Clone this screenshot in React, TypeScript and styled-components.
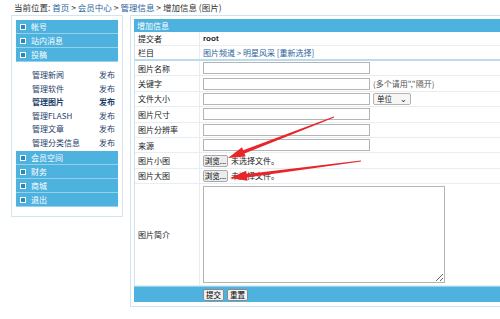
import React from 'react'
import styled, { createGlobalStyle } from 'styled-components'

const GlobalStyle = createGlobalStyle`
  html, body {
    margin: 0;
    padding: 0;
    background: #fff;
    overflow: hidden;
  }
  body {
    font-family: "Noto Sans CJK SC", "Liberation Sans", sans-serif;
    font-size: 8.5px;
    color: #222;
  }
`

const BLUE = '#4db2de'

const Page = styled.div`
  position: relative;
  width: 500px;
  height: 319px;
  overflow: hidden;
`

const Crumb = styled.div`
  height: 15px;
  line-height: 15px;
  padding-left: 14px;
  font-size: 8.5px;
  color: #333;
  a {
    color: #2a5f9a;
    text-decoration: none;
  }
`

const Body = styled.div`
  display: flex;
  align-items: flex-start;
  gap: 7px;
  padding-left: 11px;
`

const Side = styled.div`
  width: 102px;
  flex: none;
  border: 1px solid #d3e5ef;
  padding: 4px 4px 9px 4px;
`

const SideHead = styled.div`
  height: 13px;
  line-height: 13px;
  background: ${BLUE};
  border-bottom: 1px solid #93d1ec;
  color: #fff;
  display: flex;
  align-items: center;
  gap: 5px;
  padding-left: 4px;
  font-size: 8px;
`

const Box = styled.span`
  width: 4px;
  height: 4px;
  border: 1px solid #fff;
  background: #2f86b8;
  flex: none;
`

const SideList = styled.div`
  padding: 6px 0 2px 0;
`

const SideItem = styled.div<{ $active?: boolean }>`
  height: 13.5px;
  line-height: 13.5px;
  display: flex;
  justify-content: space-between;
  padding: 0 3px 0 16px;
  font-size: 8px;
  color: #1e3f6a;
  font-weight: ${p => (p.$active ? 700 : 400)};
`

const Main = styled.div`
  flex: none;
  width: 380px;
  border: 1px solid #cfe3ee;
  padding: 3px 0 4px 3px;
`

const Head = styled.div`
  height: 13px;
  line-height: 13px;
  background: ${BLUE};
  color: #fff;
  padding-left: 3px;
  font-size: 8px;
`

const Table = styled.div`
  border-left: 1px solid #cfe3ee;
`

const Row = styled.div<{ $h?: number; $sep?: boolean }>`
  display: flex;
  height: ${p => p.$h ?? 15.4}px;
  box-sizing: border-box;
  border-bottom: ${p => (p.$sep ? '2px solid #b8dcee' : '1px solid #e6eef3')};
`

const Label = styled.div`
  box-sizing: border-box;
  width: 65px;
  flex: none;
  border-right: 1px solid #e6eef3;
  padding-left: 3px;
  display: flex;
  align-items: center;
  font-size: 8px;
  color: #222;
`

const Value = styled.div`
  flex: 1;
  display: flex;
  align-items: center;
  padding-left: 3px;
  gap: 3px;
  font-size: 8px;
`

const Strong = styled.b`
  font-family: "Liberation Sans", sans-serif;
  font-size: 8px;
`

const Link = styled.span`
  color: #2a5f9a;
`

const Input = styled.input`
  box-sizing: border-box;
  width: 167px;
  height: 12px;
  border: 1px solid #b4b4b4;
  padding: 0;
  margin: 0;
`

const Hint = styled.span`
  color: #555;
  font-size: 8px;
`

const Select = styled.div`
  box-sizing: border-box;
  width: 38px;
  height: 12px;
  border: 1px solid #b4b4b4;
  border-radius: 2px;
  display: flex;
  align-items: center;
  justify-content: space-between;
  padding: 0 3px;
  font-size: 7.5px;
  background: #f6f6f6;
`

const FileBtn = styled.button`
  box-sizing: border-box;
  height: 12px;
  width: 25px;
  padding: 0;
  border: 1px solid #a9a9a9;
  border-radius: 2px;
  background: #ececec;
  font-family: inherit;
  font-size: 7.5px;
  line-height: 10px;
`

const TextArea = styled.textarea`
  box-sizing: border-box;
  width: 242px;
  height: 97px;
  border: 1px solid #b4b4b4;
  margin: 0;
`

const Foot = styled.div`
  height: 15px;
  background: ${BLUE};
  border-top: 1px solid #93d1ec;
  display: flex;
  align-items: center;
  gap: 3px;
  padding-left: 69px;
`

const FootBtn = styled.button`
  box-sizing: border-box;
  height: 12px;
  padding: 0 2px;
  border: 1px solid #8a8a8a;
  border-radius: 2px;
  background: #f0f0f0;
  font-family: inherit;
  font-size: 7.5px;
  line-height: 10px;
`

const Arrows = styled.svg`
  position: absolute;
  left: 0;
  top: 0;
  pointer-events: none;
`

const heads = ['帐号', '站内消息', '投稿']
const items = ['管理新闻', '管理软件', '管理图片', '管理FLASH', '管理文章', '管理分类信息']
const tails = ['会员空间', '财务', '商城', '退出']

function arrow(x1: number, y1: number, x2: number, y2: number) {
  const dx = x2 - x1
  const dy = y2 - y1
  const len = Math.hypot(dx, dy)
  const ux = dx / len
  const uy = dy / len
  const nx = -uy
  const ny = ux
  const hl = 17
  const hw = 5
  const bx = x2 - ux * hl
  const by = y2 - uy * hl
  const pts = [
    [x1 + nx * 0.6, y1 + ny * 0.6],
    [bx + nx * 1.8, by + ny * 1.8],
    [bx + nx * hw, by + ny * hw],
    [x2, y2],
    [bx - nx * hw, by - ny * hw],
    [bx - nx * 1.8, by - ny * 1.8],
    [x1 - nx * 0.6, y1 - ny * 0.6],
  ]
  return pts.map(p => p.join(',')).join(' ')
}

export default function App() {
  return (
    <Page>
      <GlobalStyle />
      <Crumb>
        当前位置: <a>首页</a> &gt; <a>会员中心</a> &gt; <a>管理信息</a> &gt; 增加信息 (图片)
      </Crumb>
      <Body>
        <Side>
          {heads.map(h => (
            <SideHead key={h}><Box />{h}</SideHead>
          ))}
          <SideList>
            {items.map(it => (
              <SideItem key={it} $active={it === '管理图片'}>
                <span>{it}</span><span>发布</span>
              </SideItem>
            ))}
          </SideList>
          {tails.map(h => (
            <SideHead key={h}><Box />{h}</SideHead>
          ))}
        </Side>
        <Main>
          <Head>增加信息</Head>
          <Table>
            <Row $h={14}>
              <Label>提交者</Label>
              <Value><Strong>root</Strong></Value>
            </Row>
            <Row $h={15} $sep>
              <Label>栏目</Label>
              <Value><Link>图片频道 &gt; 明星风采 [重新选择]</Link></Value>
            </Row>
            <Row>
              <Label>图片名称</Label>
              <Value><Input /></Value>
            </Row>
            <Row>
              <Label>关键字</Label>
              <Value><Input /><Hint>(多个请用","隔开)</Hint></Value>
            </Row>
            <Row>
              <Label>文件大小</Label>
              <Value>
                <Input />
                <Select><span>单位</span><span>⌄</span></Select>
              </Value>
            </Row>
            <Row>
              <Label>图片尺寸</Label>
              <Value><Input /></Value>
            </Row>
            <Row>
              <Label>图片分辨率</Label>
              <Value><Input /></Value>
            </Row>
            <Row>
              <Label>来源</Label>
              <Value><Input /></Value>
            </Row>
            <Row>
              <Label>图片小图</Label>
              <Value><FileBtn>浏览...</FileBtn><span>未选择文件。</span></Value>
            </Row>
            <Row>
              <Label>图片大图</Label>
              <Value><FileBtn>浏览...</FileBtn><span>未选择文件。</span></Value>
            </Row>
            <Row $h={102}>
              <Label>图片简介</Label>
              <Value><TextArea /></Value>
            </Row>
          </Table>
          <Foot>
            <FootBtn>提交</FootBtn>
            <FootBtn>重置</FootBtn>
          </Foot>
        </Main>
      </Body>
      <Arrows width="500" height="319">
        <polygon points={arrow(334, 117, 228, 158)} fill="#e8262a" />
        <polygon points={arrow(361, 161, 230, 178)} fill="#e8262a" />
      </Arrows>
    </Page>
  )
}
